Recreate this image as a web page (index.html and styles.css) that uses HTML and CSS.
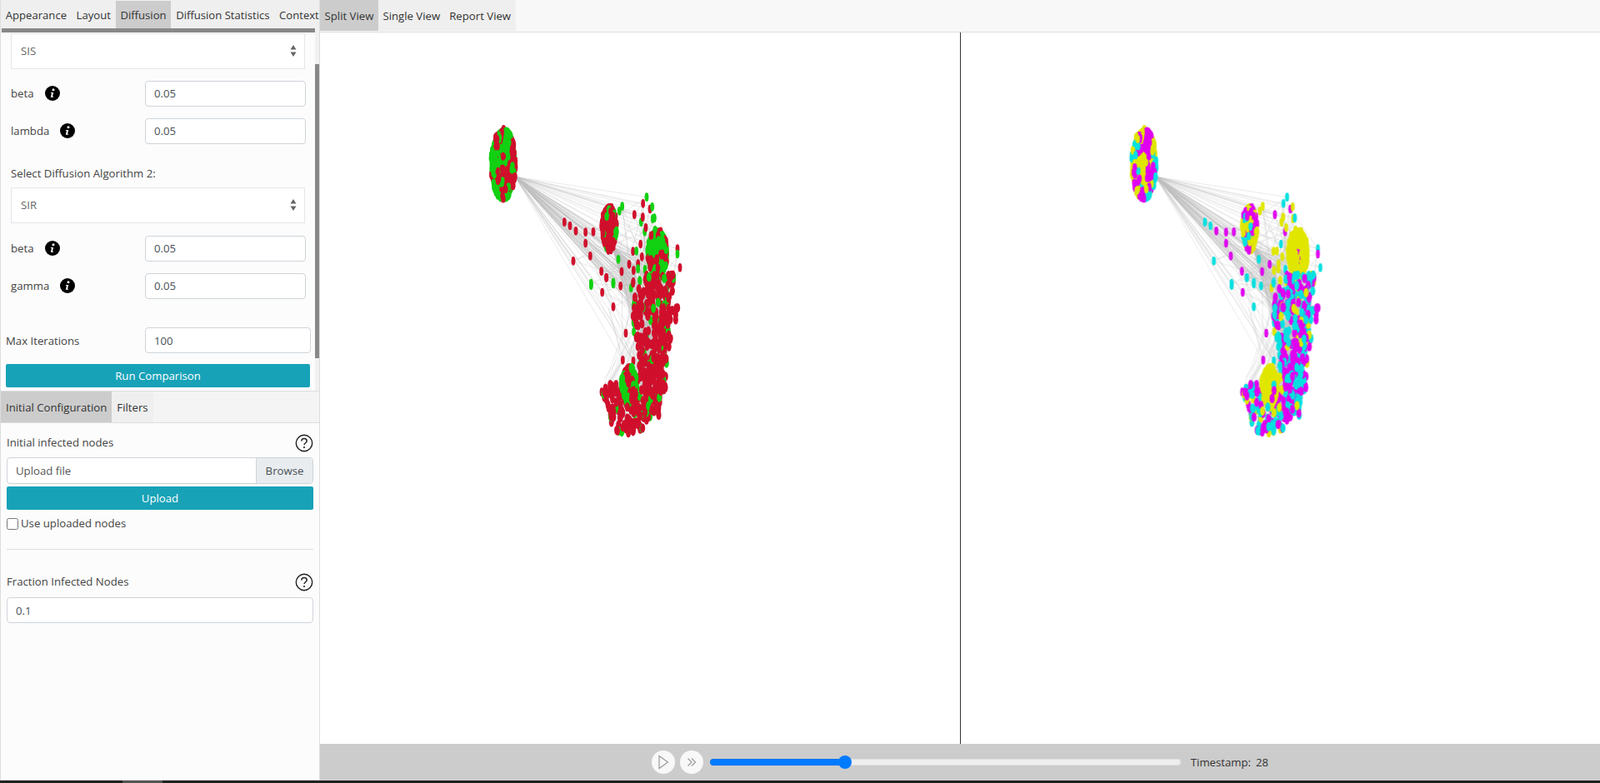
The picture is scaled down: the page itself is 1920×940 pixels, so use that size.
FILE: index.html
```html
<!DOCTYPE html>
<html lang="en">
<head>
    <meta charset="UTF-8">
    <title>Network Diffusion</title>
    <link rel="stylesheet" href="styles.css">
    <script src="graph.js" defer></script>
</head>
<body>
    <div class="app">
        <aside class="side">
            <div class="tabs side-tabs">
                <a class="tab">Appearance</a>
                <a class="tab">Layout</a>
                <a class="tab active">Diffusion</a>
                <a class="tab">Diffusion Statistics</a>
                <a class="tab">Context</a>
            </div>
            <div class="hbar"><div class="hthumb"></div></div>
            <div class="algo-wrap">
                <div class="algo" id="algo">
                    <p class="algo-title">Select Diffusion Algorithm 1:</p>
                    <div class="select-wrap">
                        <select class="algo-select"><option>SIS</option></select>
                        <svg class="arrows" width="8" height="16" viewBox="0 0 8 16"><path d="M4 1L7.5 6.5H.5zM4 15L.5 9.500H7.500z" fill="#666"/></svg>
                    </div>
                    <div class="param">
                        <label>beta</label>
                        <svg class="info" viewBox="0 0 18 18"><circle cx="9" cy="9" r="9"/><circle cx="10" cy="4.800" r="1.500" fill="#fff"/><path d="M7 8h3.200L9 12.800h1.200l-.2 1H6.800L8 9H7z" fill="#fff"/></svg>
                        <input class="field param-input" value="0.05">
                    </div>
                    <div class="param">
                        <label>lambda</label>
                        <svg class="info" viewBox="0 0 18 18"><circle cx="9" cy="9" r="9"/><circle cx="10" cy="4.800" r="1.500" fill="#fff"/><path d="M7 8h3.200L9 12.800h1.200l-.2 1H6.800L8 9H7z" fill="#fff"/></svg>
                        <input class="field param-input" value="0.05">
                    </div>
                    <p class="algo-title second">Select Diffusion Algorithm 2:</p>
                    <div class="select-wrap lower">
                        <select class="algo-select"><option>SIR</option></select>
                        <svg class="arrows" width="8" height="16" viewBox="0 0 8 16"><path d="M4 1L7.5 6.5H.5zM4 15L.5 9.500H7.500z" fill="#666"/></svg>
                    </div>
                    <div class="param">
                        <label>beta</label>
                        <svg class="info" viewBox="0 0 18 18"><circle cx="9" cy="9" r="9"/><circle cx="10" cy="4.800" r="1.500" fill="#fff"/><path d="M7 8h3.200L9 12.800h1.200l-.2 1H6.800L8 9H7z" fill="#fff"/></svg>
                        <input class="field param-input" value="0.05">
                    </div>
                    <div class="param">
                        <label>gamma</label>
                        <svg class="info" viewBox="0 0 18 18"><circle cx="9" cy="9" r="9"/><circle cx="10" cy="4.800" r="1.500" fill="#fff"/><path d="M7 8h3.200L9 12.800h1.200l-.2 1H6.800L8 9H7z" fill="#fff"/></svg>
                        <input class="field param-input" value="0.05">
                    </div>
                    <div class="iter">
                        <label>Max Iterations</label>
                        <input class="field iter-input" value="100">
                    </div>
                    <button class="btn run">Run Comparison</button>
                </div>
                <div class="vbar"><div class="vthumb"></div></div>
            </div>
            <div class="tabs config-tabs">
                <a class="tab active">Initial Configuration</a>
                <a class="tab">Filters</a>
            </div>
            <div class="config">
                <div class="config-head">
                    <label>Initial infected nodes</label>
                    <svg class="help" viewBox="0 0 22 22"><circle cx="11" cy="11" r="9.700" fill="none" stroke="#222" stroke-width="1.400"/><path d="M7.800 8.600c0-2 1.400-3.100 3.200-3.100s3.200 1.100 3.200 2.800c0 1.500-.9 2.100-1.800 2.700-.9.600-1.300 1-1.300 2.100" fill="none" stroke="#222" stroke-width="1.500"/><circle cx="11" cy="16" r="1.100" fill="#222"/></svg>
                </div>
                <div class="upload-group">
                    <span class="upload-name">Upload file</span>
                    <span class="upload-browse">Browse</span>
                </div>
                <button class="btn upload">Upload</button>
                <label class="check"><input type="checkbox"><span>Use uploaded nodes</span></label>
                <hr class="rule">
                <div class="config-head">
                    <label>Fraction Infected Nodes</label>
                    <svg class="help" viewBox="0 0 22 22"><circle cx="11" cy="11" r="9.700" fill="none" stroke="#222" stroke-width="1.400"/><path d="M7.800 8.600c0-2 1.400-3.100 3.200-3.100s3.200 1.100 3.200 2.800c0 1.500-.9 2.100-1.800 2.700-.9.600-1.300 1-1.300 2.100" fill="none" stroke="#222" stroke-width="1.500"/><circle cx="11" cy="16" r="1.100" fill="#222"/></svg>
                </div>
                <input class="field fraction" value="0.1">
            </div>
        </aside>
        <main class="main">
            <nav class="view-tabs">
                <a class="tab active">Split View</a>
                <a class="tab">Single View</a>
                <a class="tab">Report View</a>
            </nav>
            <div class="views">
                <canvas class="graph" id="graph-left"></canvas>
                <canvas class="graph" id="graph-right"></canvas>
            </div>
            <div class="player">
                <button class="round">
                    <svg width="14" height="18" viewBox="0 0 14 18"><path d="M2 1.500L12.500 9 2 16.500z" fill="none" stroke="#999" stroke-width="1.200"/></svg>
                </button>
                <button class="round">
                    <svg width="14" height="14" viewBox="0 0 14 14"><path d="M2.500 2.500L7 7l-4.500 4.500M7 2.500L11.500 7 7 11.500" fill="none" stroke="#999" stroke-width="1.200"/></svg>
                </button>
                <input class="slider" type="range" min="0" max="100" value="28">
                <span class="stamp">Timestamp:</span>
                <span class="stamp">28</span>
            </div>
        </main>
    </div>
    <div class="page-scroll"><div class="page-thumb"></div></div>
</body>
</html>
```

FILE: styles.css
```css
* { box-sizing: border-box; }
body { margin: 0; height: 940px; overflow: hidden; font-family: "Open Sans", sans-serif; font-size: 13.2px; color: #444; background: #fff; }
.app { display: flex; height: 937px; }

/* left column */
.side { width: 384px; flex: none; display: flex; flex-direction: column; background: #fcfcfc; border-left: 1px solid #ddd; border-right: 1px solid #ddd; border-bottom: 1px solid #ddd; }
.tabs { display: flex; background: #f4f4f4; }
.tab { padding: 0 5.5px; color: #333; flex: none; display: flex; align-items: center; background: #efefef; }
.tab.active { background: #ccc; }
.side-tabs { height: 34px; flex: none; overflow: hidden; padding-top: 1px; background: #efefef; font-size: 13.1px; }
.side-tabs .tab { padding: 0 5.8px; }
.hbar { height: 5px; flex: none; background: #f1f1f1; }
.hthumb { width: 376px; height: 5px; margin-left: 1px; background: #888; }

.algo-wrap { display: flex; height: 430px; flex: none; }
.algo { flex: 1; min-width: 0; overflow: hidden; padding: 0 5px 52px 6px; }
.vbar { width: 5px; flex: none; background: #f1f1f1; }
.vthumb { height: 353px; margin-top: 38px; background: #888; }
.algo-title { margin: 0; height: 18px; line-height: 18px; padding-left: 6px; margin-top: 21px; margin-bottom: 8px; }
.algo-title.second { margin-top: 26px; }
.select-wrap { position: relative; margin-left: 6px; width: 353px; }
.algo-select { width: 100%; height: 43px; appearance: none; border: 1px solid #e3e6ea; border-radius: 0; background: #fff; padding: 0 11px 2px; font: inherit; color: #666; }
.arrows { position: absolute; right: 10px; top: 13px; }
.param { display: flex; align-items: center; margin-top: 13px; padding-left: 6px; height: 32px; }
.param + .param { margin-top: 13px; }
.select-wrap.lower + .param { margin-top: 14px; }
.param label { margin-right: 13px; }
.info { width: 18px; height: 18px; }
.field { font: inherit; color: #495057; background: #fff; border: 1px solid #ced4da; border-radius: 4px; padding: 0 10px; outline: none; }
.param-input { width: 193px; height: 31px; margin-left: auto; margin-right: 6px; }
.iter { display: flex; align-items: center; justify-content: space-between; margin-top: 34px; }
.iter-input { width: 199px; height: 31px; padding-left: 10px; }
.btn { display: block; border: 0; border-radius: 2px; background: #17a2b8; color: #fff; font: inherit; font-weight: 500; padding: 0; }
.run { width: 365px; height: 28px; margin-top: 13px; }

/* bottom of left column */
.config-tabs { height: 39px; border-top: 1px solid #ddd; border-bottom: 1px solid #ddd; flex: none; }
.config-tabs .tab { padding: 0 6px; }
.config { padding: 0 7px; }
.config-head { display: flex; align-items: center; justify-content: space-between; height: 22px; margin-top: 13px; }
.config-head label { padding-bottom: 2px; }
.help { width: 22px; height: 22px; }
.upload-group { display: flex; height: 32px; margin-top: 6px; border: 1px solid #ced4da; border-radius: 4px; background: #fff; overflow: hidden; line-height: 30px; }
.upload-name { flex: 1; padding-left: 10px; color: #555; }
.upload-browse { width: 68px; text-align: center; background: #e9ecef; border-left: 1px solid #ced4da; color: #495057; }
.upload { width: 100%; height: 28px; margin-top: 3px; }
.check { display: flex; align-items: center; margin-top: 9px; height: 16px; }
.check input { width: 14px; height: 14px; margin: 0 3px 0 0; }
.check span { padding-bottom: 2px; }
.rule { border: 0; border-top: 1px solid #ddd; margin: 22px 0 0; }
.rule + .config-head { margin-top: 28px; }
.fraction { display: block; width: 100%; height: 31px; margin-top: 7px; }

/* main area */
.main { flex: 1; min-width: 0; display: flex; flex-direction: column; }
.view-tabs { display: flex; height: 39px; flex: none; background: #f8f8f8; border-bottom: 1px solid #ddd; padding-bottom: 1px; }
.views { flex: 1; display: flex; min-height: 0; background: #fff; }
.graph { flex: 1; width: 0; height: 100%; display: block; }
.graph + .graph { border-left: 1px solid #333; }
.player { height: 44px; flex: none; background: #ccc; display: flex; align-items: center; justify-content: center; color: #333; }
.round { width: 28px; height: 28px; border-radius: 50%; border: 0; padding: 0; background: #f8f8f8; margin-right: 6px; display: flex; align-items: center; justify-content: center; }
.slider { width: 565px; height: 16px; margin: 0 12px 0 2px; appearance: none; background: transparent; }
.slider::-webkit-slider-runnable-track { height: 8px; border-radius: 4px; background: linear-gradient(to right, #007bff 162px, #eee 162px); box-shadow: inset 0 0 0 1px rgba(0, 0, 0, 0.06); }
.slider::-webkit-slider-thumb { appearance: none; width: 16px; height: 16px; margin-top: -4px; border-radius: 50%; background: #007bff; }
.stamp + .stamp { margin-left: 6px; }

.page-scroll { height: 3px; background: #1f1f1f; padding-left: 147px; }
.page-thumb { width: 48px; height: 3px; background: #555; }
```

FILE: graph.js
```js
// draws the same network twice, coloured by the state of each node
var LEFT = { r: "#d00f2c", g: "#12d012" };
var RIGHT = { c: "#06e0e0", m: "#e000f0", y: "#e0e600" };
var seed = 7;
function rnd() {
    seed = (seed * 16807) % 2147483647;
    return seed / 2147483647;
}
function pick(table) {
    var x = rnd();
    for (var k in table) {
        if (x < table[k]) return k;
        x -= table[k];
    }
    return k;
}

// [x, y, left state, right state], read off the top part of the picture (3x)
var top3x = [
    [352,380,"r","c"],[372,393,"r","c"],[393,412,"r","m"],[428,416,"r","m"],[456,415,"r","m"],[428,456,"r","m"],
    [445,502,"r","m"],[384,520,"r","c"],[485,557,"r","m"],[503,580,"r","c"],[546,514,"g","c"],[558,558,"r","m"],
    [585,532,"r","m"],[601,554,"r","y"],[599,485,"r","y"],[611,484,"g","y"],[626,459,"r","c"],[631,505,"r","y"],
    [617,530,"r","y"],[617,548,"g","y"],[641,415,"g","m"],[645,400,"r","y"],[628,380,"g","y"],[634,362,"r","y"],
    [604,353,"r","m"],[635,313,"r","c"],[648,290,"g","c"],[660,333,"r","m"],[668,325,"g","y"],[670,368,"g","y"],
    [676,365,"g","c"],[550,340,"g","y"],[560,323,"g","y"],[759,476,"r","c"],[759,495,"g","m"],[768,544,"r","c"],
    [735,570,"r","y"],[729,575,"g","y"],[745,595,"r","y"],[642,550,"g","c"],[623,590,"g","y"],[600,595,"r","c"],
    [528,597,"g","c"],[448,600,"g","c"]
];
// same, for the lower part
var low3x = [
    [88,38,"g","c"],[128,63,"r","m"],[168,115,"r","c"],[168,33,"g","c"],[194,40,"r","c"],[143,10,"r","c"],
    [232,47,"g","y"],[239,30,"r","c"],[264,22,"g","y"],[213,210,"r","m"],[242,205,"g","y"],[202,307,"r","m"],
    [240,310,"r","c"],[264,322,"g","m"],[270,353,"r","c"],[126,422,"r","m"],[138,422,"g","c"]
];
var shape = [
    [240,90],[285,0],[385,0],[385,70],[400,110],[400,150],[382,190],[375,240],[362,280],[358,350],[360,390],
    [350,440],[340,500],[300,540],[230,580],[190,575],[160,530],[145,470],[128,420],[145,375],[200,400],
    [215,340],[255,370],[258,330],[260,280],[250,230],[235,170]
];
function inside(x, y) {
    var hit = false;
    for (var i = 0, j = shape.length - 1; i < shape.length; j = i++) {
        var a = shape[i], b = shape[j];
        if ((a[1] > y) != (b[1] > y) && x < (b[0] - a[0]) * (y - a[1]) / (b[1] - a[1]) + a[0]) hit = !hit;
    }
    return hit;
}

var loose = [];
top3x.forEach(function (n) { loose.push({ x: 560 + n[0] / 3, y: 140 + n[1] / 3, l: n[2], r: n[3] }); });
low3x.forEach(function (n) { loose.push({ x: 680 + n[0] / 3, y: 330 + n[1] / 3, l: n[2], r: n[3] }); });

var dense = [];
while (dense.length < 460) {
    var zx = 120 + rnd() * 285, zy = rnd() * 585;
    if (!inside(zx, zy)) continue;
    dense.push({
        x: 680 + zx / 3, y: 330 + zy / 3,
        l: pick({ r: 0.9, g: 0.1 }),
        r: pick({ m: 0.46, c: 0.44, y: 0.1 })
    });
}

// big groups come out in patches: each node takes the state of the nearest blob
function cluster(cx, cy, rx, ry, count, blobs, lmix, rmix) {
    var seeds = [], out = [];
    for (var b = 0; b < blobs; b++) {
        var ba = rnd() * Math.PI * 2, bd = Math.sqrt(rnd());
        seeds.push({ x: Math.cos(ba) * bd, y: Math.sin(ba) * bd, l: pick(lmix), r: pick(rmix) });
    }
    for (var i = 0; i < count; i++) {
        var a = rnd() * Math.PI * 2, d = Math.sqrt(rnd());
        var ux = Math.cos(a) * d, uy = Math.sin(a) * d;
        var best = seeds[0], bestDist = 9;
        seeds.forEach(function (s) {
            var dist = (s.x - ux) * (s.x - ux) + (s.y - uy) * (s.y - uy);
            if (dist < bestDist) { bestDist = dist; best = s; }
        });
        out.push({ x: cx + ux * rx, y: cy + uy * ry, l: best.l, r: best.r });
    }
    return out;
}
var clusterA = cluster(604, 197, 15, 42, 520, 60, { g: 0.55, r: 0.45 }, { y: 0.4, m: 0.42, c: 0.18 });
var clusterB = cluster(731, 274, 9, 27, 170, 22, { r: 0.6, g: 0.4 }, { y: 0.62, m: 0.28, c: 0.1 });
var clusterC = cluster(789, 304, 12, 29, 220, 26, { g: 0.5, r: 0.5 }, { y: 0.96, m: 0.03, c: 0.01 });
var clusterD = cluster(755, 462, 9, 22, 70, 8, { g: 0.75, r: 0.25 }, { y: 1 });

// edges
var edges = [];
var fanFrom = { x: 618, y: 212 };
var upper = dense.filter(function (n) { return n.y < 400; });
loose.forEach(function (n) {
    if (n.y < 450) edges.push([fanFrom, n]);
});
for (var i = 0; i < 60; i++) edges.push([fanFrom, upper[Math.floor(rnd() * upper.length)]]);
for (var j = 0; j < loose.length; j++) {
    edges.push([loose[j], loose[Math.floor(rnd() * loose.length)]]);
    edges.push([loose[j], upper[Math.floor(rnd() * upper.length)]]);
}
var hubB = { x: 735, y: 296 }, hubC = { x: 790, y: 320 };
dense.forEach(function (n, idx) {
    if (idx % 3 == 0 && n.y < 440) edges.push([hubB, n]);
    if (idx % 4 == 0) edges.push([hubC, n]);
    for (var k = 0; k < 3; k++) {
        var o = dense[Math.floor(rnd() * dense.length)];
        if (Math.abs(o.y - n.y) < 60) edges.push([n, o]);
    }
});
// the few long ones that hang down on the left of the lower group
edges.push([{ x: 730, y: 370 }, { x: 745, y: 425 }]);
edges.push([{ x: 745, y: 425 }, { x: 725, y: 455 }]);
edges.push([{ x: 732, y: 375 }, { x: 748, y: 432 }]);
edges.push([{ x: 748, y: 432 }, { x: 730, y: 460 }]);

function drawNode(ctx, n, rx, ry, key, colors, shift) {
    ctx.fillStyle = colors[n[key]];
    ctx.beginPath();
    ctx.ellipse(n.x - shift, n.y, rx, ry, 0, 0, Math.PI * 2);
    ctx.fill();
}

function drawBase(ctx, c, color, shift) {
    ctx.fillStyle = color;
    ctx.beginPath();
    ctx.ellipse(c[0] - shift, c[1], c[2], c[3], 0, 0, Math.PI * 2);
    ctx.fill();
}

function draw(id, key, colors, shift, base) {
    var canvas = document.getElementById(id);
    var ctx;
    canvas.width = canvas.clientWidth;
    canvas.height = canvas.clientHeight;
    ctx = canvas.getContext("2d");
    ctx.translate(0, -39);

    ctx.strokeStyle = "rgba(190,190,190,0.55)";
    ctx.lineWidth = 0.6;
    edges.forEach(function (e) {
        ctx.beginPath();
        ctx.moveTo(e[0].x - shift, e[0].y);
        ctx.lineTo(e[1].x - shift, e[1].y);
        ctx.stroke();
    });

    drawBase(ctx, [604, 197, 16.5, 44], colors[base[0]], shift);
    drawBase(ctx, [731, 274, 10.5, 30], colors[base[1]], shift);
    drawBase(ctx, [789, 304, 14, 31], colors[base[2]], shift);
    clusterA.concat(clusterB, clusterC).forEach(function (n) { drawNode(ctx, n, 2.7, 5, key, colors, shift); });

    loose.forEach(function (n) { drawNode(ctx, n, 2.4, 5.3, key, colors, shift); });
    dense.slice(0, 380).forEach(function (n) { drawNode(ctx, n, 3, 5.6, key, colors, shift); });
    drawBase(ctx, [755, 465, 10, 29], colors[base[3]], shift);
    clusterD.forEach(function (n) { drawNode(ctx, n, 3.5, 6.5, key, colors, shift); });
    dense.slice(380).forEach(function (n) { drawNode(ctx, n, 3, 5.6, key, colors, shift); });
}

draw("graph-left", "l", LEFT, 384, ["g", "r", "g", "r"]);
draw("graph-right", "r", RIGHT, 384, ["y", "y", "y", "y"]);

document.getElementById("algo").scrollTop = 46;
```
